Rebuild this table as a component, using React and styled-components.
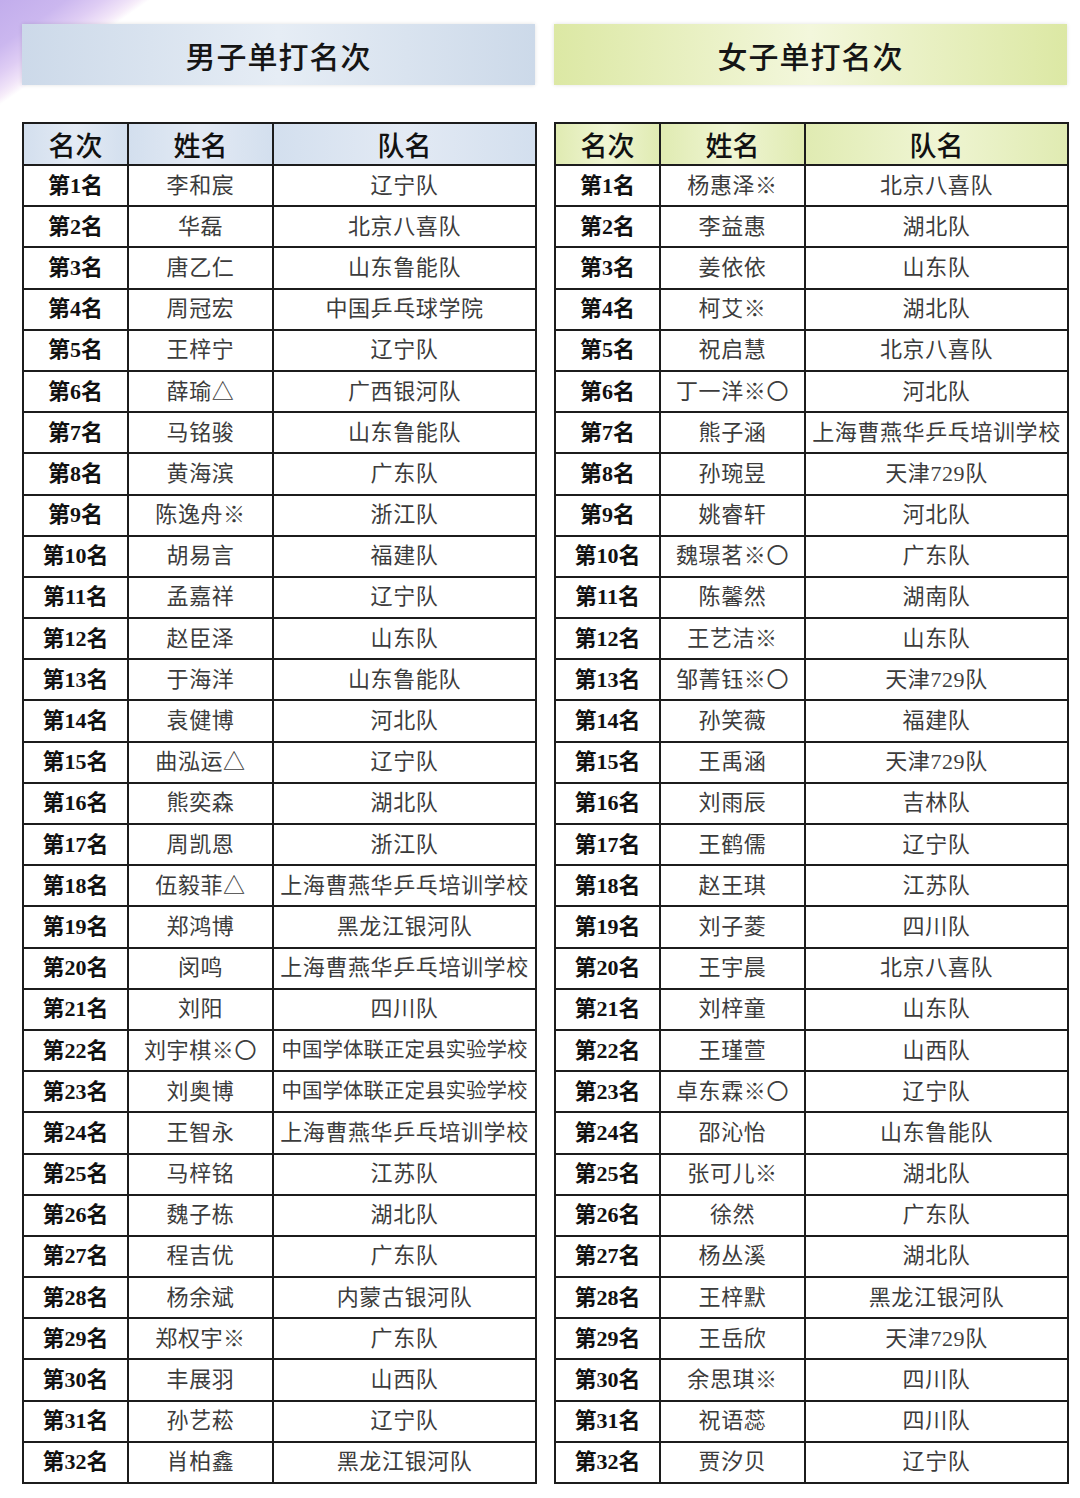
import styled, { createGlobalStyle } from "styled-components"

const GlobalStyle = createGlobalStyle`
    html, body {
        margin: 0;
        padding: 0;
        background: #ffffff;
    }
    body {
        font-family: "Liberation Serif", "Noto Sans CJK SC", serif;
    }
`

const men = [
    ["李和宸", "辽宁队"],
    ["华磊", "北京八喜队"],
    ["唐乙仁", "山东鲁能队"],
    ["周冠宏", "中国乒乓球学院"],
    ["王梓宁", "辽宁队"],
    ["薛瑜△", "广西银河队"],
    ["马铭骏", "山东鲁能队"],
    ["黄海滨", "广东队"],
    ["陈逸舟※", "浙江队"],
    ["胡易言", "福建队"],
    ["孟嘉祥", "辽宁队"],
    ["赵臣泽", "山东队"],
    ["于海洋", "山东鲁能队"],
    ["袁健博", "河北队"],
    ["曲泓运△", "辽宁队"],
    ["熊奕森", "湖北队"],
    ["周凯恩", "浙江队"],
    ["伍毅菲△", "上海曹燕华乒乓培训学校"],
    ["郑鸿博", "黑龙江银河队"],
    ["闵鸣", "上海曹燕华乒乓培训学校"],
    ["刘阳", "四川队"],
    ["刘宇棋※〇", "中国学体联正定县实验学校"],
    ["刘奥博", "中国学体联正定县实验学校"],
    ["王智永", "上海曹燕华乒乓培训学校"],
    ["马梓铭", "江苏队"],
    ["魏子栋", "湖北队"],
    ["程吉优", "广东队"],
    ["杨余斌", "内蒙古银河队"],
    ["郑权宇※", "广东队"],
    ["丰展羽", "山西队"],
    ["孙艺菘", "辽宁队"],
    ["肖柏鑫", "黑龙江银河队"],
]

const women = [
    ["杨惠泽※", "北京八喜队"],
    ["李益惠", "湖北队"],
    ["姜依依", "山东队"],
    ["柯艾※", "湖北队"],
    ["祝启慧", "北京八喜队"],
    ["丁一洋※〇", "河北队"],
    ["熊子涵", "上海曹燕华乒乓培训学校"],
    ["孙琬昱", "天津729队"],
    ["姚睿轩", "河北队"],
    ["魏璟茗※〇", "广东队"],
    ["陈馨然", "湖南队"],
    ["王艺洁※", "山东队"],
    ["邹菁钰※〇", "天津729队"],
    ["孙笑薇", "福建队"],
    ["王禹涵", "天津729队"],
    ["刘雨辰", "吉林队"],
    ["王鹤儒", "辽宁队"],
    ["赵王琪", "江苏队"],
    ["刘子菱", "四川队"],
    ["王宇晨", "北京八喜队"],
    ["刘梓童", "山东队"],
    ["王瑾萱", "山西队"],
    ["卓东霖※〇", "辽宁队"],
    ["邵沁怡", "山东鲁能队"],
    ["张可儿※", "湖北队"],
    ["徐然", "广东队"],
    ["杨丛溪", "湖北队"],
    ["王梓默", "黑龙江银河队"],
    ["王岳欣", "天津729队"],
    ["余思琪※", "四川队"],
    ["祝语蕊", "四川队"],
    ["贾汐贝", "辽宁队"],
]

const themes = {
    blue: { edge: "#ccd9e9", mid: "#e6edf5", cell: "#d3dfee", cellMid: "#e3eaf4" },
    green: { edge: "#dce8a4", mid: "#f3f7dc", cell: "#e0ebb2", cellMid: "#eff5d3" },
}

const Page = styled.div`
    width: 1080px;
    height: 1498px;
    box-sizing: border-box;
    padding: 24px 13px 0 22px;
    background: linear-gradient(145deg, #c2adec 0, #cbb7ef 38px, #dfcdf4 60px, #efe2f8 74px, #f7eefa 80px, rgba(255, 255, 255, 0) 86px);
    display: grid;
    grid-template-columns: 513px 513px;
    column-gap: 19px;
    align-items: start;
`

const Column = styled.section`
    display: flex;
    flex-direction: column;
    gap: 37px;
`

const Banner = styled.h2`
    margin: 0;
    height: 61px;
    display: flex;
    align-items: center;
    justify-content: center;
    font-family: "Noto Sans CJK SC", sans-serif;
    font-size: 30px;
    font-weight: 500;
    letter-spacing: 1px;
    color: #151515;
    background: linear-gradient(90deg, ${(p) => themes[p.$tone].edge}, ${(p) => themes[p.$tone].mid} 50%, ${(p) => themes[p.$tone].edge});
    box-shadow: 0 0 4px rgba(0, 0, 0, 0.12);
`

const Table = styled.table`
    width: 513px;
    border-collapse: collapse;
    table-layout: fixed;
    border: 2px solid #1c1c1c;
`

const HeadCell = styled.th`
    height: 40px;
    padding: 0;
    border: 2px solid #1c1c1c;
    font-family: "Noto Sans CJK SC", sans-serif;
    font-size: 27px;
    font-weight: 500;
    color: #111;
    line-height: 1;
    background: linear-gradient(90deg, ${(p) => themes[p.$tone].cell}, ${(p) => themes[p.$tone].cellMid} 50%, ${(p) => themes[p.$tone].cell});
`

const Row = styled.tr`
    height: 41.2px;
`

const RankCell = styled.td`
    padding: 0;
    border: 2px solid #1c1c1c;
    text-align: center;
    font-family: "Liberation Serif", "Noto Sans CJK SC", serif;
    font-size: 22px;
    font-weight: 700;
    color: #111;
    line-height: 1;
    white-space: nowrap;
`

const TextCell = styled.td`
    padding: 0;
    border: 2px solid #1c1c1c;
    text-align: center;
    font-family: "Liberation Serif", "Noto Sans CJK SC", serif;
    font-size: ${(p) => (p.$long ? "20.5px" : "22px")};
    font-weight: 400;
    letter-spacing: ${(p) => (p.$long ? "0" : "0.6px")};
    color: #3c3c3c;
    line-height: 1;
    white-space: nowrap;
    overflow: hidden;
`

function RankTable({ title, tone, players }) {
    return (
        <Column>
            <Banner $tone={tone}>{title}</Banner>
            <Table>
                <colgroup>
                    <col style={{ width: 105 }} />
                    <col style={{ width: 145 }} />
                    <col style={{ width: 263 }} />
                </colgroup>
                <thead>
                    <tr>
                        <HeadCell $tone={tone}>名次</HeadCell>
                        <HeadCell $tone={tone}>姓名</HeadCell>
                        <HeadCell $tone={tone}>队名</HeadCell>
                    </tr>
                </thead>
                <tbody>
                    {players.map(([name, team], i) => (
                        <Row key={i}>
                            <RankCell>第{i + 1}名</RankCell>
                            <TextCell>{name}</TextCell>
                            <TextCell $long={team.length > 11}>{team}</TextCell>
                        </Row>
                    ))}
                </tbody>
            </Table>
        </Column>
    )
}

export default function App() {
    return (
        <>
            <GlobalStyle />
            <Page>
                <RankTable title="男子单打名次" tone="blue" players={men} />
                <RankTable title="女子单打名次" tone="green" players={women} />
            </Page>
        </>
    )
}
